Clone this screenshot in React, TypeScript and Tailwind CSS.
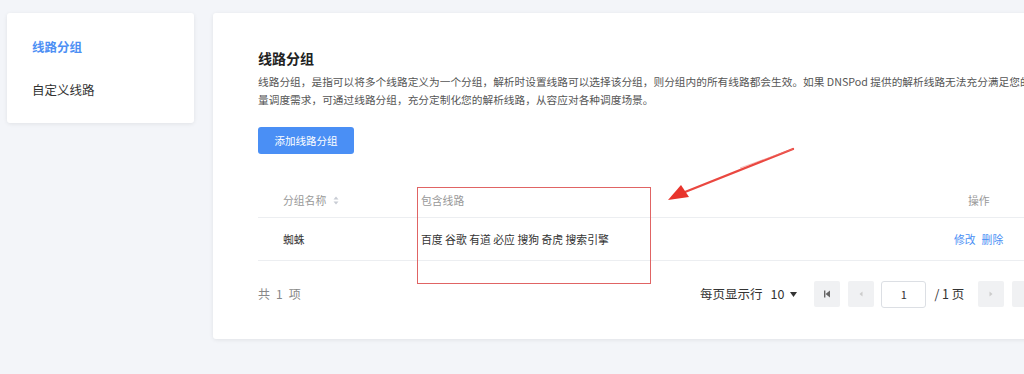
import React from "react";

const font = { fontFamily: '"Noto Sans CJK SC", "Noto Sans", sans-serif' };

function SortIcon() {
  return (
    <svg width="6" height="9" viewBox="0 0 6 9" className="ml-[7px]">
      <path d="M3 0.5 L5.5 3.5 H0.5 Z" fill="#c8ccd4" />
      <path d="M3 8.5 L5.5 5.5 H0.5 Z" fill="#c8ccd4" />
    </svg>
  );
}

function PageBtn({ children }: { children?: React.ReactNode }) {
  return (
    <div className="flex h-[26px] w-[26px] items-center justify-center rounded-[2px] bg-[#f0f1f3]">
      {children}
    </div>
  );
}

export default function App() {
  return (
    <div
      className="relative flex h-[374px] w-[1024px] items-start gap-[19px] overflow-hidden bg-[#f3f5f9] pl-[7px] pt-[13px]"
      style={font}
    >
      {/* Sidebar */}
      <div className="flex h-[110px] w-[187px] shrink-0 flex-col gap-[27px] rounded-[3px] bg-white pl-[25px] pt-[26px] shadow-[0_1px_4px_rgba(0,0,0,0.08)]">
        <div className="text-[12.5px] font-bold leading-[16px] text-[#4d8ff4]">线路分组</div>
        <div className="text-[12.5px] leading-[16px] text-[#333]">自定义线路</div>
      </div>

      {/* Main card */}
      <div className="h-[326px] w-[860px] shrink-0 rounded-[3px] bg-white pl-[45px] pt-[35px] shadow-[0_1px_4px_rgba(0,0,0,0.08)]">
        <div className="text-[14px] font-bold leading-[20px] text-[#222]">线路分组</div>
        <div className="mt-[5px] whitespace-nowrap text-[10.7px] leading-[18px] text-[#555]">
          <div>线路分组，是指可以将多个线路定义为一个分组，解析时设置线路可以选择该分组，则分组内的所有线路都会生效。如果 DNSPod 提供的解析线路无法充分满足您的流</div>
          <div>量调度需求，可通过线路分组，充分定制化您的解析线路，从容应对各种调度场景。</div>
        </div>
        <button className="mt-[18px] flex h-[27px] w-[96px] items-center justify-center rounded-[3px] bg-[#4a8ff5] text-[10.5px] text-white">
          添加线路分组
        </button>

        {/* Table */}
        <div className="mt-[30px] text-[10.8px]">
          <div className="flex h-[34px] items-center border-b border-[#eceef1] text-[#999]">
            <div className="flex w-[163px] items-center pl-[25px]">
              分组名称
              <SortIcon />
            </div>
            <div className="w-[533px]">包含线路</div>
            <div className="pl-[14px]">操作</div>
          </div>
          <div className="flex h-[43px] items-center border-b border-[#eceef1] text-[#333]">
            <div className="w-[163px] pl-[25px]">蜘蛛</div>
            <div className="flex w-[533px] gap-[2.5px]">
              <span>百度</span>
              <span>谷歌</span>
              <span>有道</span>
              <span>必应</span>
              <span>搜狗</span>
              <span>奇虎</span>
              <span>搜索引擎</span>
            </div>
            <div className="flex gap-[6px] text-[#4a8ff5]">
              <span>修改</span>
              <span>删除</span>
            </div>
          </div>
        </div>

        {/* Footer */}
        <div className="mt-[20px] flex h-[26px] items-center">
          <div className="flex w-[442px] gap-[6px] text-[12px] text-[#888]">
            <span>共</span>
            <span>1</span>
            <span>项</span>
          </div>
          <div className="flex items-center text-[12.5px] text-[#333]">
            每页显示行
            <span className="ml-[8px]">10</span>
            <svg width="7" height="5" viewBox="0 0 7 5" className="ml-[6px]">
              <path d="M0 0 H7 L3.5 5 Z" fill="#333" />
            </svg>
          </div>
          <div className="ml-[17px] flex items-center">
            <PageBtn>
              <svg width="8" height="8" viewBox="0 0 8 8">
                <rect x="1" y="0.5" width="1.4" height="7" fill="#666" />
                <path d="M7 0.5 V7.5 L2.5 4 Z" fill="#666" />
              </svg>
            </PageBtn>
            <div className="ml-[8px]">
              <PageBtn>
                <svg width="4" height="6" viewBox="0 0 4 6">
                  <path d="M3.5 0.5 V5.5 L0.5 3 Z" fill="#ccc" />
                </svg>
              </PageBtn>
            </div>
            <div className="ml-[7px] flex h-[27px] w-[45px] items-center justify-center rounded-[3px] border border-[#dcdfe4] bg-white text-[11px] text-[#333]">
              1
            </div>
            <div className="ml-[8px] text-[12.5px] text-[#333]">/ 1 页</div>
            <div className="ml-[14px]">
              <PageBtn>
                <svg width="4" height="6" viewBox="0 0 4 6">
                  <path d="M0.5 0.5 V5.5 L3.5 3 Z" fill="#ccc" />
                </svg>
              </PageBtn>
            </div>
            <div className="ml-[8px]">
              <PageBtn />
            </div>
          </div>
        </div>
      </div>

      {/* Red annotation box */}
      <div className="pointer-events-none absolute left-[417px] top-[187px] h-[97px] w-[234px] border border-[#e06464]" />

      {/* Red annotation arrow */}
      <svg
        className="pointer-events-none absolute left-0 top-0"
        width="1024"
        height="374"
        viewBox="0 0 1024 374"
      >
        <path d="M793 149 L685 192" stroke="#e8342c" strokeWidth="2.2" strokeLinecap="round" opacity="0.9" />
        <path d="M793 149 L740 168" stroke="#f07a74" strokeWidth="1" opacity="0.5" />
        <path d="M668 200 L681 185 L689 197 Z" fill="#e8342c" />
      </svg>
    </div>
  );
}
